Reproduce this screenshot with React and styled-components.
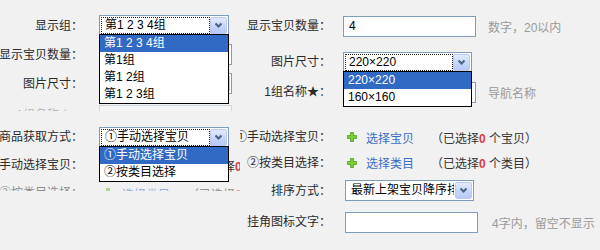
import React from 'react';
import styled, { createGlobalStyle } from 'styled-components';

const GlobalStyle = createGlobalStyle`
  html, body {
    margin: 0;
    padding: 0;
    background: #f1f1f1;
  }
  body {
    font-family: "Liberation Sans", "Noto Sans CJK SC", sans-serif;
    font-size: 12px;
    color: #2b2b2b;
  }
`;

const Page = styled.div`
  display: flex;
  width: 600px;
  height: 250px;
  overflow: hidden;
`;

const Column = styled.div`
  flex: none;
  width: ${p => p.$w}px;
  height: 250px;
  padding-top: 11px;
  box-sizing: border-box;
  overflow: hidden;
`;

const Block = styled.div`
  margin-top: ${p => p.$mt || 0}px;
`;

const Row = styled.div`
  position: relative;
  display: flex;
  align-items: center;
  gap: ${p => p.$gap ?? 12}px;
  height: ${p => p.$h}px;
  margin-top: ${p => p.$mt || 0}px;
`;

const Clip = styled.div`
  height: ${p => p.$h}px;
  overflow: hidden;
  opacity: ${p => p.$fade};
`;

const Label = styled.div`
  flex: none;
  width: ${p => p.$w}px;
  display: flex;
  justify-content: flex-end;
  white-space: nowrap;
  line-height: 16px;
`;

const SelectBox = styled.div`
  position: relative;
  flex: none;
  display: flex;
  width: ${p => p.$w}px;
  height: 21px;
  padding: 1px;
  box-sizing: border-box;
  border: 1px solid #7f9db9;
  background: #fff;
  color: #000;
`;

const SelectValue = styled.div`
  flex: 1;
  min-width: 0;
  padding-left: 3px;
  box-sizing: border-box;
  border: 1px dotted ${p => (p.$focus ? '#222' : 'transparent')};
  white-space: nowrap;
  overflow: hidden;
  line-height: 15px;
`;

const ArrowButton = styled.div`
  flex: none;
  width: 17px;
  box-sizing: border-box;
  border: 1px solid #bccbf0;
  border-radius: 2px;
  background: linear-gradient(#e2eafe, #c3d3fb 60%, #b7c9f8);
  display: flex;
  align-items: center;
  justify-content: center;
`;

const List = styled.ul`
  position: absolute;
  z-index: 2;
  left: -1px;
  top: calc(100% - 1px);
  width: calc(100% + 2px);
  margin: 0;
  padding: 0;
  list-style: none;
  box-sizing: border-box;
  border: 1px solid #000;
  background: #fff;
`;

const Option = styled.li`
  height: 17px;
  line-height: 17px;
  padding-left: 4px;
  white-space: nowrap;
  background: ${p => (p.$active ? '#316ac5' : '#fff')};
  color: ${p => (p.$active ? '#fff' : '#000')};
`;

const TextInput = styled.div`
  flex: none;
  width: ${p => p.$w}px;
  height: 21px;
  padding-left: 5px;
  box-sizing: border-box;
  border: 1px solid #7f9db9;
  background: #fff;
  color: #000;
  line-height: 19px;
`;

const Hint = styled.span`
  color: #9a9a9a;
  white-space: nowrap;
`;

const Pick = styled.div`
  display: flex;
  align-items: center;
  white-space: nowrap;
  padding-left: 4px;
`;

const AddLink = styled.a`
  width: 65px;
  margin-left: 9px;
  color: #3a6ec6;
  text-decoration: none;
`;

const Count = styled.span`
  color: #333;
`;

const Paren = styled.span`
  display: inline-block;
  width: 12px;
  text-align: center;
`;

const Zero = styled.b`
  color: #e03b3b;
`;

const Chevron = () => (
  <svg width="9" height="7" viewBox="0 0 9 7">
    <path d="M1.5 1.5 L4.5 4.5 L7.5 1.5" fill="none" stroke="#4d6185" strokeWidth="2" />
  </svg>
);

const PlusIcon = () => (
  <svg width="10" height="10" viewBox="0 0 10 10">
    <path d="M3.5 0.5h3v3h3v3h-3v3h-3v-3h-3v-3h3z" fill="#7ccd35" stroke="#4f9c1b" strokeWidth="0.8" />
  </svg>
);

const Select = ({ w = 130, value, focus, options, active = 0 }) => (
  <SelectBox $w={w}>
    <SelectValue $focus={focus}>{value}</SelectValue>
    <ArrowButton>
      <Chevron />
    </ArrowButton>
    {options && (
      <List>
        {options.map((o, i) => (
          <Option key={o} $active={i === active}>{o}</Option>
        ))}
      </List>
    )}
  </SelectBox>
);

const PickRow = ({ link, unit }) => (
  <Pick>
    <PlusIcon />
    <AddLink href="#">{link}</AddLink>
    <Count>
      <Paren>（</Paren>已选择<Zero>0</Zero> 个{unit}<Paren>）</Paren>
    </Count>
  </Pick>
);

const App = () => (
  <>
    <GlobalStyle />
    <Page>
      <Column $w={240}>
        <Block>
          <Row $h={29} $gap={16}>
            <Label $w={83}>显示组：</Label>
            <Select
              value="第1 2 3 4组"
              focus
              options={['第1 2 3 4组', '第1组', '第1 2组', '第1 2 3组']}
            />
          </Row>
          <Row $h={29} $gap={16}>
            <Label $w={83}>显示宝贝数量：</Label>
            <TextInput $w={133}>4</TextInput>
          </Row>
          <Row $h={29} $gap={16}>
            <Label $w={83}>图片尺寸：</Label>
            <Select w={133} value="220×220" />
          </Row>
          <Clip $h={13} $fade={0.3}>
            <Row $h={34} $gap={16}>
              <Label $w={83}>1组名称★：</Label>
              <TextInput $w={133} />
            </Row>
          </Clip>
        </Block>
        <Block $mt={12}>
          <Row $h={28} $gap={16}>
            <Label $w={83}>商品获取方式：</Label>
            <Select
              value="①手动选择宝贝"
              focus
              options={['①手动选择宝贝', '②按类目选择']}
            />
          </Row>
          <Row $h={28} $gap={16}>
            <Label $w={83}>①手动选择宝贝：</Label>
            <PickRow link="选择宝贝" unit="宝贝" />
          </Row>
          <Clip $h={12} $fade={0.5}>
            <Row $h={28} $gap={16}>
              <Label $w={83}>②按类目选择：</Label>
              <PickRow link="选择类目" unit="类目" />
            </Row>
          </Clip>
        </Block>
      </Column>

      <Column $w={360}>
        <Row $h={30}>
          <Label $w={91}>显示宝贝数量：</Label>
          <TextInput $w={133}>4</TextInput>
          <Hint>数字，20以内</Hint>
        </Row>
        <Row $h={30} $mt={6}>
          <Label $w={91}>图片尺寸：</Label>
          <Select w={129} value="220×220" focus options={['220×220', '160×160']} />
        </Row>
        <Row $h={30}>
          <Label $w={91}>1组名称★：</Label>
          <TextInput $w={133} />
          <Hint>导航名称</Hint>
        </Row>
        <Row $h={26} $mt={17}>
          <Label $w={91}>①手动选择宝贝：</Label>
          <PickRow link="选择宝贝" unit="宝贝" />
        </Row>
        <Row $h={25}>
          <Label $w={91}>②按类目选择：</Label>
          <PickRow link="选择类目" unit="类目" />
        </Row>
        <Row $h={31} $gap={14}>
          <Label $w={91}>排序方式：</Label>
          <Select w={129} value="最新上架宝贝降序排列" />
        </Row>
        <Row $h={32} $gap={14}>
          <Label $w={91}>挂角图标文字：</Label>
          <TextInput $w={133} />
          <Hint>4字内，留空不显示</Hint>
        </Row>
      </Column>
    </Page>
  </>
);

export default App;
